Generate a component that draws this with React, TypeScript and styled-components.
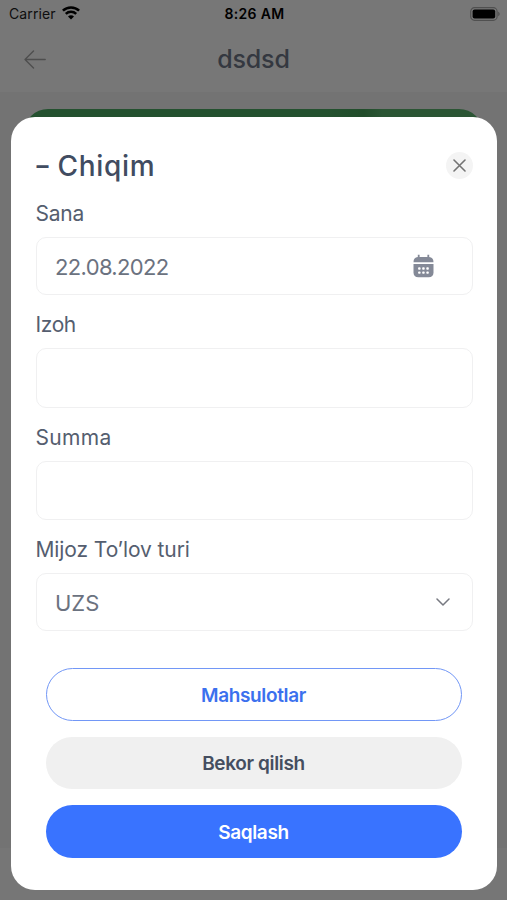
import React from "react";
import styled, { createGlobalStyle } from "styled-components";

const GlobalStyle = createGlobalStyle`
  * { box-sizing: border-box; }
  html, body { margin: 0; padding: 0; }
  body { background: #737373; font-family: Inter, "Liberation Sans", sans-serif; }
  button, input { font: inherit; }
`;

const Screen = styled.div`
  position: relative;
  width: 507px;
  height: 900px;
  overflow: hidden;
  background: linear-gradient(#e6e6e6 848px, #ededed 848px);
`;

const TopArea = styled.header`
  height: 92px;
  background: #eeeeee;
`;

const StatusBar = styled.div`
  height: 28px;
  display: grid;
  grid-template-columns: 1fr auto 1fr;
  align-items: center;
  padding: 0 7px 0 9px;
  color: #000;
  font-size: 14px;
  line-height: 28px;
`;

const Carrier = styled.div`
  display: flex;
  align-items: center;
  gap: 6px;
  color: #1c1c1c;
  letter-spacing: 0.1px;

  svg { margin-top: -2px; }
`;

const Clock = styled.div`
  font-weight: 600;
  letter-spacing: 0.35px;
`;

const BatterySlot = styled.div`
  display: flex;
  justify-content: flex-end;
  padding-bottom: 1px;
`;

const NavBar = styled.div`
  height: 62px;
  display: grid;
  grid-template-columns: 72px 1fr 72px;
  align-items: center;
`;

const BackButton = styled.button`
  border: 0;
  background: none;
  padding: 1px 0 0 24px;
  display: flex;
`;

const NavTitle = styled.h1`
  margin: 0;
  text-align: center;
  font-size: 25px;
  font-weight: 450;
  letter-spacing: -0.2px;
  color: #687080;
`;

const SummaryCard = styled.div`
  height: 160px;
  margin: 16.5px 24px 0;
  border-radius: 24px;
  background: linear-gradient(90deg, #48a35e 0 66%, #439a56 74%, #56aa69 78%);
`;

const Scrim = styled.div`
  position: absolute;
  inset: 0;
  background: rgba(0, 0, 0, 0.5);
  padding: 117px 10px 10px 11px;
`;

const Sheet = styled.section`
  height: 773px;
  border-radius: 24px;
  background: #fff;
  padding: 32px 24.5px 0 24.5px;
`;

const SheetHeader = styled.div`
  display: flex;
  align-items: center;
  justify-content: space-between;
  height: 34px;
`;

const SheetTitle = styled.h2`
  margin: 0;
  padding-left: 1px;
  display: flex;
  align-items: center;
  gap: 11px;
  font-size: 28px;
  line-height: 34px;
  font-weight: 550;
  letter-spacing: 0.7px;
  color: #414c61;
`;

const TitleSign = styled.span`
  font-size: 24px;
  font-weight: 700;
  letter-spacing: -2px;
`;

const CloseButton = styled.button`
  width: 27px;
  height: 27px;
  margin-bottom: 2px;
  padding: 0;
  border: 0;
  border-radius: 50%;
  background: #f4f4f4;
  display: grid;
  place-items: center;
`;

const Fields = styled.form`
  display: grid;
  grid-template-rows: 111px 113px 112px 112px;
  padding-top: 17px;
`;

const Field = styled.div``;

const Label = styled.label<{ $spacing: number }>`
  display: block;
  height: 28px;
  margin-bottom: 9px;
  font-size: 21px;
  line-height: 28px;
  color: #555e6f;
  letter-spacing: ${(p) => p.$spacing}px;
  white-space: nowrap;
`;

const Control = styled.div<{ $height?: number; $spacing?: number; $inset?: number }>`
  display: flex;
  align-items: center;
  justify-content: space-between;
  height: ${(p) => p.$height ?? 59}px;
  padding: 0 ${(p) => p.$inset ?? 21.5}px 0 18.5px;
  border: 1.5px solid #f0f0f1;
  border-radius: 10px;
  font-size: 22px;
  color: #6b7280;
  letter-spacing: ${(p) => p.$spacing ?? 0}px;
`;

const Value = styled.span`
  padding-top: 1px;
`;

const Actions = styled.div`
  display: flex;
  flex-direction: column;
  gap: 16px;
  margin: 20px 10.5px 0;
`;

const ActionButton = styled.button<{ $kind: "outline" | "muted" | "primary" }>`
  height: 52.5px;
  padding: 2px 1px 0 0;
  border-radius: 27px;
  border: ${(p) => (p.$kind === "outline" ? "1.5px solid #7297f6" : "0")};
  background: ${(p) => ({ outline: "#fff", muted: "#f0f0f0", primary: "#3973ff" })[p.$kind]};
  color: ${(p) => ({ outline: "#3b70ee", muted: "#454e60", primary: "#fff" })[p.$kind]};
  font-size: 19px;
  font-weight: 600;
  letter-spacing: -0.35px;
`;

const WifiIcon = () => (
  <svg width="18" height="14" viewBox="0 0 18 14" fill="none" stroke="#000" strokeWidth="2.5">
    <path d="M0.9 4.7C5.3 .3 12.7 .3 17.1 4.7" />
    <path d="M3.8 7.9C6.7 5.1 11.3 5.1 14.2 7.9" />
    <path d="M9 13.5 6 10.4C7.7 8.8 10.3 8.8 12 10.4Z" fill="#000" stroke="none" />
  </svg>
);

const BatteryIcon = () => (
  <svg width="30" height="14" viewBox="0 0 30 14">
    <rect x="0.7" y="0.7" width="26.4" height="12.6" rx="3.8" fill="none" stroke="#a0a0a0" strokeWidth="1.2" />
    <rect x="2.6" y="2.6" width="22.6" height="8.8" rx="2" fill="#000" />
    <path d="M28.2 4.8c2 .7 2 3.7 0 4.4z" fill="#a0a0a0" />
  </svg>
);

const ArrowIcon = () => (
  <svg width="22" height="19" viewBox="0 0 22 19" fill="none" stroke="#9c9c9c" strokeWidth="1.4" strokeLinecap="round" strokeLinejoin="round">
    <path d="M21.2 9.5H1M9.5 1 1 9.5l8.5 8.5" />
  </svg>
);

const CloseIcon = () => (
  <svg width="13" height="13" viewBox="0 0 13 13" fill="none" stroke="#747474" strokeWidth="1.6" strokeLinecap="round">
    <path d="M1 1l11 11M12 1 1 12" />
  </svg>
);

const CalendarIcon = () => (
  <svg width="21" height="24" viewBox="0 0 21 24">
    <path d="M4.8 0.8h1.8v2.1h7.8V.8h1.8V3C19 3.1 20.5 5 20.5 8.2H.5C.5 5 2 3.1 4.8 3z" fill="#848997" />
    <path d="M.5 10.1h20v8.4c0 3.2-1.7 4.8-4.9 4.8H5.4C2.2 23.3.5 21.7.5 18.5z" fill="#848997" />
    <g fill="#fff">
      <rect x="5.1" y="13.3" width="2.5" height="2.4" rx=".8" />
      <rect x="9.2" y="13.3" width="2.5" height="2.4" rx=".8" />
      <rect x="13.3" y="13.3" width="2.5" height="2.4" rx=".8" />
      <rect x="5.1" y="17.4" width="2.5" height="2.4" rx=".8" />
      <rect x="9.2" y="17.4" width="2.5" height="2.4" rx=".8" />
      <rect x="13.3" y="17.4" width="2.5" height="2.4" rx=".8" />
    </g>
  </svg>
);

const ChevronIcon = () => (
  <svg width="14" height="8" viewBox="0 0 14 8" fill="none" stroke="#777981" strokeWidth="1.5" strokeLinecap="round" strokeLinejoin="round">
    <path d="M1 1l6 6 6-6" />
  </svg>
);

export default function App() {
  return (
    <>
      <GlobalStyle />
      <Screen>
        <TopArea>
          <StatusBar>
            <Carrier>
              Carrier
              <WifiIcon />
            </Carrier>
            <Clock>8:26 AM</Clock>
            <BatterySlot>
              <BatteryIcon />
            </BatterySlot>
          </StatusBar>
          <NavBar>
            <BackButton aria-label="Back">
              <ArrowIcon />
            </BackButton>
            <NavTitle>dsdsd</NavTitle>
          </NavBar>
        </TopArea>
        <SummaryCard />
        <Scrim>
          <Sheet>
            <SheetHeader>
              <SheetTitle>
                <TitleSign>–</TitleSign>
                <span>Chiqim</span>
              </SheetTitle>
              <CloseButton aria-label="Close">
                <CloseIcon />
              </CloseButton>
            </SheetHeader>
            <Fields>
              <Field>
                <Label $spacing={-0.2}>Sana</Label>
                <Control $height={58} $inset={37.5} $spacing={-0.65}>
                  <Value>22.08.2022</Value>
                  <CalendarIcon />
                </Control>
              </Field>
              <Field>
                <Label $spacing={-0.4}>Izoh</Label>
                <Control $height={60} />
              </Field>
              <Field>
                <Label $spacing={0.3}>Summa</Label>
                <Control />
              </Field>
              <Field>
                <Label $spacing={-0.1}>Mijoz To’lov turi</Label>
                <Control $height={58}>
                  <Value>UZS</Value>
                  <ChevronIcon />
                </Control>
              </Field>
            </Fields>
            <Actions>
              <ActionButton $kind="outline">Mahsulotlar</ActionButton>
              <ActionButton $kind="muted">Bekor qilish</ActionButton>
              <ActionButton $kind="primary">Saqlash</ActionButton>
            </Actions>
          </Sheet>
        </Scrim>
      </Screen>
    </>
  );
}
